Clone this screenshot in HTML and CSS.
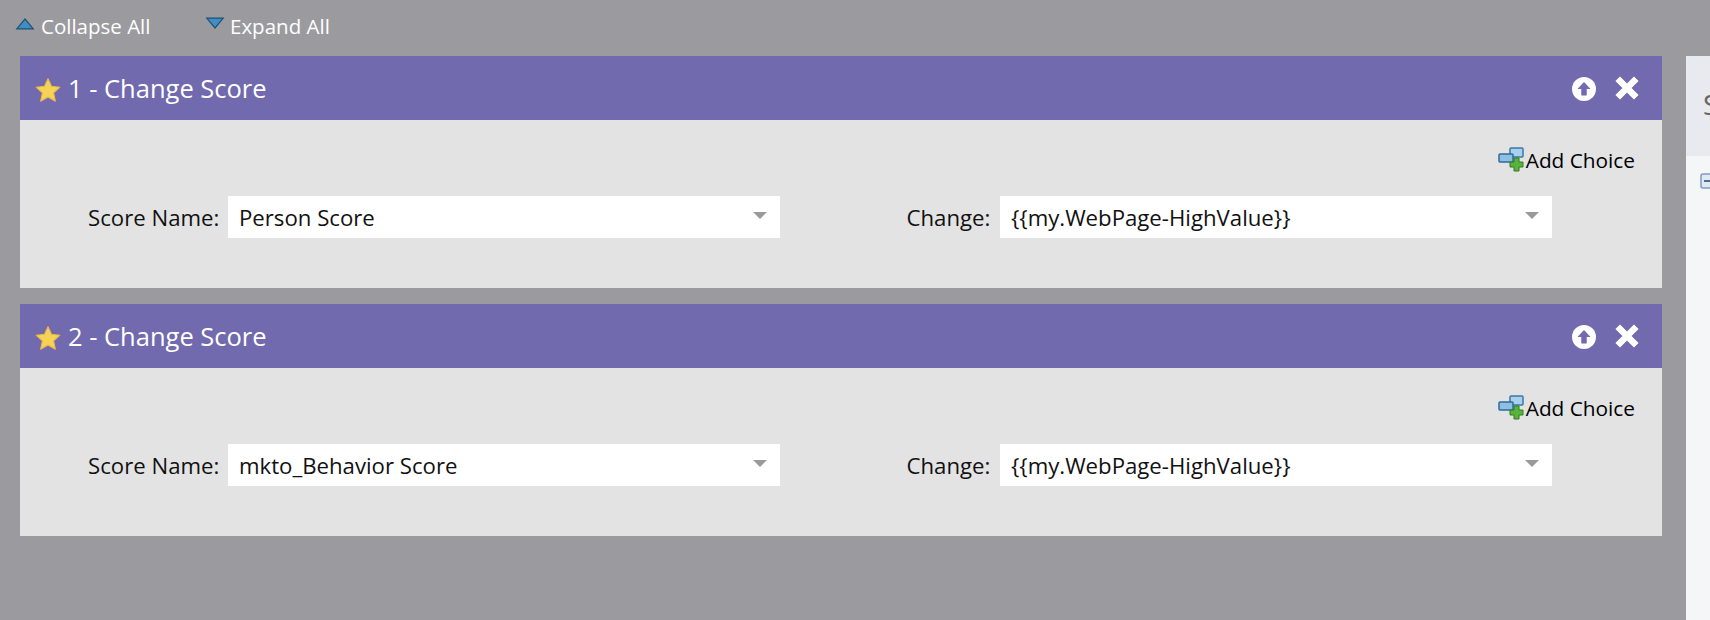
FILE: index.html
```html
<!DOCTYPE html>
<html>
<head>
    <meta charset="UTF-8">
    <title>Flow</title>
    <link rel="stylesheet" href="styles.css">
</head>
<body>
    <div class="page">
        <div class="main">
            <div class="toolbar">
                <a class="tool tool_collapse">
                    <svg width="20" height="13" viewBox="0 0 20 13"><path d="M10 1L19.5 12.5H0.5Z" fill="#1f4f73"/><path d="M10 3L17 11.3H3Z" fill="#3f8fc6"/></svg>
                    Collapse All
                </a>
                <a class="tool tool_expand">
                    <svg width="20" height="13" viewBox="0 0 20 13"><path d="M0.5 0.5H19.5L10 12Z" fill="#1f4f73"/><path d="M3 1.7H17L10 10Z" fill="#3f8fc6"/></svg>
                    Expand All
                </a>
            </div>

            <div class="card">
                <div class="card_head">
                    <svg class="star" width="26" height="26" viewBox="0 0 24 24"><path d="M12 1.5L15.2 8.6L23 9.4L17.2 14.6L18.8 22.3L12 18.4L5.2 22.3L6.8 14.6L1 9.4L8.8 8.6Z" fill="#f6d354" stroke="#e8b94a" stroke-width="1" stroke-linejoin="round"/></svg>
                    <span class="card_title">1 - Change Score</span>
                    <svg class="head_up" width="24" height="24" viewBox="0 0 24 24"><circle cx="12" cy="12" r="12" fill="#fff"/><path d="M12 5L18.5 12H14.7V18.5H9.3V12H5.5Z" fill="#716aae"/></svg>
                    <svg class="head_x" width="24" height="24" viewBox="0 0 24 24"><path d="M5 5L19 19M19 5L5 19" stroke="#fff" stroke-width="6.5" stroke-linecap="square"/></svg>
                </div>
                <div class="card_body">
                    <div class="add_row">
                        <svg width="27" height="25" viewBox="0 0 27 25"><rect x="12" y="1" width="13" height="9" rx="1" fill="#a9d0ec" stroke="#3d78a8" stroke-width="1.5"/><rect x="1" y="7" width="14" height="8" rx="1" fill="#8dbfe3" stroke="#2f6a9c" stroke-width="1.5"/><path d="M14 15H18" stroke="#3d78a8" stroke-width="1"/><path d="M16 11H21V15H25V20H21V24H16V20H12V15H16Z" fill="#58b33a" stroke="#2f7d22" stroke-width="1"/></svg>
                        <span>Add Choice</span>
                    </div>
                    <div class="field_row">
                        <label class="field_label">Score Name:</label>
                        <div class="select"><span>Person Score</span><i class="caret"></i></div>
                        <label class="field_label label_change">Change:</label>
                        <div class="select"><span>{{my.WebPage-HighValue}}</span><i class="caret"></i></div>
                    </div>
                </div>
            </div>

            <div class="card">
                <div class="card_head">
                    <svg class="star" width="26" height="26" viewBox="0 0 24 24"><path d="M12 1.5L15.2 8.6L23 9.4L17.2 14.6L18.8 22.3L12 18.4L5.2 22.3L6.8 14.6L1 9.4L8.8 8.6Z" fill="#f6d354" stroke="#e8b94a" stroke-width="1" stroke-linejoin="round"/></svg>
                    <span class="card_title">2 - Change Score</span>
                    <svg class="head_up" width="24" height="24" viewBox="0 0 24 24"><circle cx="12" cy="12" r="12" fill="#fff"/><path d="M12 5L18.5 12H14.7V18.5H9.3V12H5.5Z" fill="#716aae"/></svg>
                    <svg class="head_x" width="24" height="24" viewBox="0 0 24 24"><path d="M5 5L19 19M19 5L5 19" stroke="#fff" stroke-width="6.5" stroke-linecap="square"/></svg>
                </div>
                <div class="card_body">
                    <div class="add_row">
                        <svg width="27" height="25" viewBox="0 0 27 25"><rect x="12" y="1" width="13" height="9" rx="1" fill="#a9d0ec" stroke="#3d78a8" stroke-width="1.5"/><rect x="1" y="7" width="14" height="8" rx="1" fill="#8dbfe3" stroke="#2f6a9c" stroke-width="1.5"/><path d="M14 15H18" stroke="#3d78a8" stroke-width="1"/><path d="M16 11H21V15H25V20H21V24H16V20H12V15H16Z" fill="#58b33a" stroke="#2f7d22" stroke-width="1"/></svg>
                        <span>Add Choice</span>
                    </div>
                    <div class="field_row">
                        <label class="field_label">Score Name:</label>
                        <div class="select"><span>mkto_Behavior Score</span><i class="caret"></i></div>
                        <label class="field_label label_change">Change:</label>
                        <div class="select"><span>{{my.WebPage-HighValue}}</span><i class="caret"></i></div>
                    </div>
                </div>
            </div>
        </div>

        <div class="side">
            <div class="side_head">S</div>
            <div class="side_tree">
                <svg width="16" height="16" viewBox="0 0 16 16"><rect x="1" y="1" width="14" height="14" rx="2" fill="#dfe8f3" stroke="#7d9cc0" stroke-width="1.5"/><path d="M4 8H12" stroke="#4a6d96" stroke-width="2"/></svg>
            </div>
        </div>
    </div>
</body>
</html>
```

FILE: styles.css
```css
* {
    margin: 0;
    padding: 0;
    box-sizing: border-box;
}
body {
    width: 1710px;
    height: 620px;
    overflow: hidden;
    background-color: #9b9a9e;
    font-family: "Open Sans", "Liberation Sans", sans-serif;
}
.page {
    display: flex;
    height: 620px;
}
.main {
    width: 1686px;
    padding-left: 20px;
    padding-right: 24px;
}
.toolbar {
    display: flex;
    height: 56px;
    margin-left: -5px;
    padding-top: 14px;
}
.tool {
    display: flex;
    align-items: flex-start;
    gap: 6px;
    color: #fff;
    font-size: 20.5px;
    line-height: 25px;
}
.tool svg {
    margin-top: 3px;
}
.tool_collapse {
    width: 190px;
}
.tool_expand {
    gap: 5px;
}
.card {
    margin-bottom: 16px;
}
.card_head {
    display: flex;
    align-items: center;
    height: 64px;
    padding-left: 15px;
    padding-right: 23px;
    background-color: #716aae;
    color: #fff;
}
.star {
    flex: none;
    margin-top: 3px;
}
.card_title {
    flex: 1;
    margin-left: 7px;
    font-size: 25.5px;
    margin-top: -1px;
}
.head_up {
    margin-top: 2px;
}
.head_x {
    margin-left: 19px;
}
.card_body {
    height: 168px;
    background-color: #e3e3e3;
}
.add_row {
    display: flex;
    justify-content: flex-end;
    align-items: center;
    height: 76px;
    padding-right: 27px;
    padding-top: 4px;
    font-size: 20.8px;
    color: #000;
    gap: 1px;
}
.add_row svg {
    margin-top: -1px;
}
.field_row {
    display: flex;
    align-items: center;
    height: 42px;
    padding-left: 68px;
    font-size: 22.2px;
    color: #111;
}
.field_label {
    width: 140px;
    padding-top: 1px;
}
.label_change {
    width: 93.5px;
    margin-left: 126.5px;
}
.select {
    position: relative;
    width: 552px;
    height: 42px;
    padding-left: 11px;
    line-height: 43px;
    background-color: #fff;
}
.caret {
    position: absolute;
    top: 16px;
    right: 13px;
    width: 0;
    height: 0;
    border-left: 7.5px solid transparent;
    border-right: 7.5px solid transparent;
    border-top: 7.5px solid #9a9a9a;
}
.side {
    width: 24px;
    height: 564px;
    margin-top: 56px;
    overflow: hidden;
    background-color: #f5f6f8;
}
.side_head {
    height: 100px;
    padding-left: 17px;
    padding-top: 30px;
    background-color: #e9eaef;
    color: #666;
    font-size: 28px;
    line-height: 36px;
}
.side_tree {
    padding-left: 14px;
    padding-top: 16px;
}
```
